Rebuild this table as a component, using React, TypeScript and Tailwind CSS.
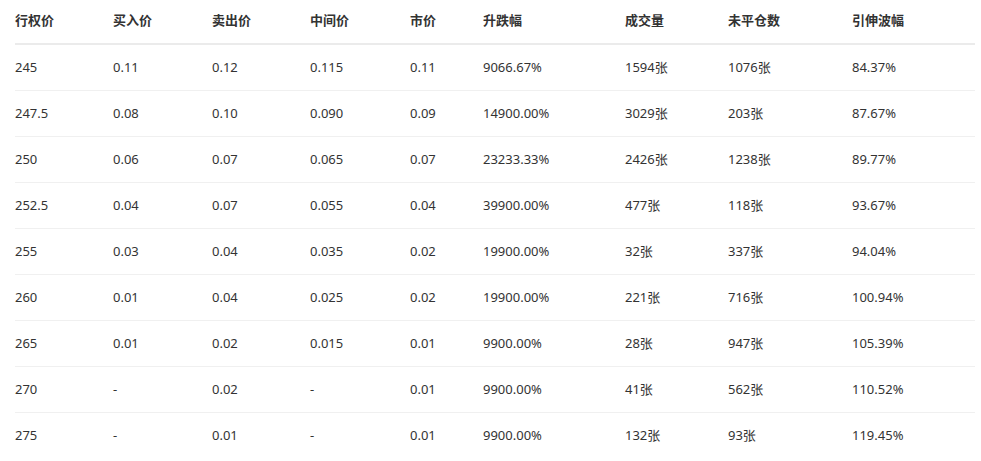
import React from 'react';

// option chain table
const headers = ['行权价', '买入价', '卖出价', '中间价', '市价', '升跌幅', '成交量', '未平仓数', '引伸波幅'];

const rows: string[][] = [
  ['245', '0.11', '0.12', '0.115', '0.11', '9066.67%', '1594张', '1076张', '84.37%'],
  ['247.5', '0.08', '0.10', '0.090', '0.09', '14900.00%', '3029张', '203张', '87.67%'],
  ['250', '0.06', '0.07', '0.065', '0.07', '23233.33%', '2426张', '1238张', '89.77%'],
  ['252.5', '0.04', '0.07', '0.055', '0.04', '39900.00%', '477张', '118张', '93.67%'],
  ['255', '0.03', '0.04', '0.035', '0.02', '19900.00%', '32张', '337张', '94.04%'],
  ['260', '0.01', '0.04', '0.025', '0.02', '19900.00%', '221张', '716张', '100.94%'],
  ['265', '0.01', '0.02', '0.015', '0.01', '9900.00%', '28张', '947张', '105.39%'],
  ['270', '-', '0.02', '-', '0.01', '9900.00%', '41张', '562张', '110.52%'],
  ['275', '-', '0.01', '-', '0.01', '9900.00%', '132张', '93张', '119.45%'],
];

const cols = 'grid grid-cols-[98px_99px_98px_100px_73px_142px_103px_124px_123px]';

export default function App() {
  return (
    <div
      className="w-[981px] h-[461px] bg-white pl-[15px] overflow-hidden text-[13px] text-[#333]"
      style={{ fontFamily: '"Noto Sans", "Noto Sans CJK SC", sans-serif' }}
    >
      <div className="w-[960px]">
        <div className={`${cols} h-[45px] items-center border-b-2 border-[#ebebeb] font-bold`}>
          {headers.map((h) => (
            <div key={h} className="pb-[2px]">{h}</div>
          ))}
        </div>
        {rows.map((r, i) => (
          <div
            key={r[0]}
            className={`${cols} h-[46px] items-center ${i < rows.length - 1 ? 'border-b border-[#f0f0f0]' : ''}`}
          >
            {r.map((c, j) => (
              <div key={j}>{c}</div>
            ))}
          </div>
        ))}
      </div>
    </div>
  );
}
